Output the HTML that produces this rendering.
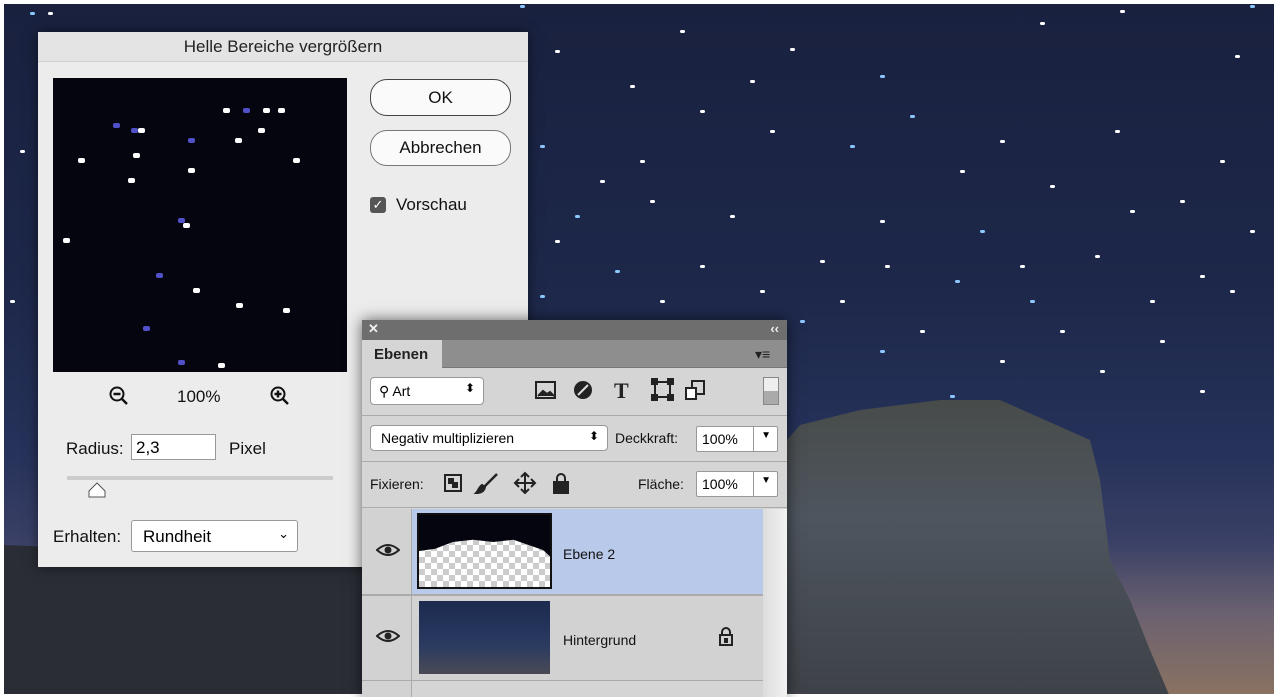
<!DOCTYPE html><html><head><style>
*{box-sizing:border-box;margin:0;padding:0}
body{width:1278px;height:697px;overflow:hidden;position:relative;font-family:"Liberation Sans",sans-serif;background:#fff}
.a{position:absolute}
.sky{left:4px;top:4px;width:1270px;height:690px;background:linear-gradient(180deg,#19213f 0%,#1d2749 40%,#26325a 65%,#3a4066 78%,#6a6070 88%,#8a7262 100%)}
.star{position:absolute;width:5px;height:3px;border-radius:2px;background:#fff}
.btn{position:absolute;border:1px solid #777;border-radius:17px;background:#fafafa;font-size:17px;text-align:center;color:#111}
.pt{font-size:14px;color:#111}
.field{background:#fff;border:1px solid #999;border-radius:3px}
</style></head><body>
<div class="a sky"></div>
<svg class="a" style="left:0;top:0" width="1278" height="697"><defs><linearGradient id="rg" x1="0" y1="0" x2="0" y2="1"><stop offset="0" stop-color="#474b4a"/><stop offset=".4" stop-color="#4e555e"/><stop offset="1" stop-color="#3e4248"/></linearGradient></defs>
<path d="M787 440L800 425L860 410L940 400L1000 400L1090 440L1100 480L1110 560L1130 600L1150 650L1170 697L787 697Z" fill="url(#rg)"/>
<path d="M4 545L380 560L380 697L4 697Z" fill="#2a2d36"/></svg>
<div id="stars"></div>
<div class="a" style="left:1274px;top:0;width:4px;height:697px;background:#fff"></div>
<div class="a" style="left:0;top:694px;width:1278px;height:3px;background:#fff"></div>
<div class="a" style="left:38px;top:32px;width:490px;height:535px;background:#ececec;box-shadow:0 0 12px rgba(0,0,0,.5)">
 <div class="a" style="left:0;top:0;width:490px;height:30px;background:#e4e4e4;border-bottom:1px solid #cfcfcf;text-align:center;font-size:17px;line-height:30px;color:#222">Helle Bereiche vergrößern</div>
 <div class="a" id="prev" style="left:15px;top:46px;width:294px;height:294px;background:#05050f;overflow:hidden"></div>
 <svg class="a" style="left:70px;top:353px" width="22" height="22"><circle cx="9" cy="9" r="6.5" fill="none" stroke="#111" stroke-width="2"/><path d="M5.5 9h7M14 14l5 5" stroke="#111" stroke-width="2.4"/></svg>
 <div class="a" style="left:139px;top:355px;font-size:17px;color:#111">100%</div>
 <svg class="a" style="left:231px;top:353px" width="22" height="22"><circle cx="9" cy="9" r="6.5" fill="none" stroke="#111" stroke-width="2"/><path d="M5.5 9h7M9 5.5v7M14 14l5 5" stroke="#111" stroke-width="2.4"/></svg>
 <div class="a" style="left:28px;top:407px;font-size:17px;color:#111">Radius:</div>
 <div class="a field" style="left:93px;top:402px;width:85px;height:26px;border-radius:0;font-size:17px;padding:3px 4px">2,3</div>
 <div class="a" style="left:191px;top:407px;font-size:17px;color:#111">Pixel</div>
 <div class="a" style="left:29px;top:444px;width:266px;height:4px;background:#ccc"></div>
 <svg class="a" style="left:49px;top:449px" width="20" height="18"><path d="M2 16V10L10 2L18 10V16Z" fill="#fff" stroke="#555"/></svg>
 <div class="a" style="left:15px;top:495px;font-size:17px;color:#111">Erhalten:</div>
 <div class="a field" style="left:93px;top:488px;width:167px;height:32px;font-size:17px;padding:6px 11px">Rundheit<span style="position:absolute;right:8px;top:5px;font-size:13px">&#8964;</span></div>
 <div class="btn" style="left:332px;top:47px;width:141px;height:37px;line-height:35px;border-width:1.5px;border-color:#444">OK</div>
 <div class="btn" style="left:332px;top:98px;width:141px;height:36px;line-height:34px">Abbrechen</div>
 <div class="a" style="left:332px;top:165px;width:16px;height:16px;background:#555;border-radius:3px;color:#fff;font-size:13px;text-align:center;line-height:16px">&#10003;</div>
 <div class="a" style="left:358px;top:163px;font-size:17px;color:#111">Vorschau</div>
</div>
<div class="a" style="left:362px;top:320px;width:425px;height:377px;background:#d5d5d5;box-shadow:0 0 14px rgba(0,0,0,.6)">
 <div class="a" style="left:0;top:0;width:425px;height:20px;background:#6e6e6e;color:#eee;font-size:13px;font-weight:bold;padding:1px 6px">✕<span style="position:absolute;right:8px">‹‹</span></div>
 <div class="a" style="left:0;top:20px;width:425px;height:28px;background:#8e8e8e;border-bottom:1px solid #777"></div>
 <div class="a" style="left:0;top:20px;width:80px;height:29px;background:#d5d5d5;font-size:15px;font-weight:bold;color:#222;padding:6px 12px">Ebenen</div>
 <div class="a" style="left:393px;top:26px;color:#222;font-size:14px">▾≡</div>
 <div class="a field" style="left:8px;top:57px;width:114px;height:28px;border-radius:4px;font-size:14px;padding:5px 8px">&#9906; Art<span style="position:absolute;right:8px;top:3px;font-size:12px">⬍</span></div>
 <svg class="a" style="left:172px;top:58px" width="180" height="26" fill="none" stroke="#222" stroke-width="2">
  <rect x="2" y="4" width="19" height="16"/><path d="M4 18l5-5 4 3 3-2 4 4" fill="#222"/>
  <circle cx="49" cy="12" r="8" fill="#222"/><path d="M44 17L54 7" stroke="#ddd"/>
  <text x="80" y="20" font-family="Liberation Serif" font-size="22" font-weight="bold" fill="#222" stroke="none">T</text>
  <rect x="121" y="4" width="15" height="15"/><rect x="118" y="1" width="5" height="5" fill="#222"/><rect x="134" y="1" width="5" height="5" fill="#222"/><rect x="118" y="17" width="5" height="5" fill="#222"/><rect x="134" y="17" width="5" height="5" fill="#222"/>
  <rect x="158" y="3" width="12" height="13"/><rect x="152" y="10" width="10" height="11" fill="#fff"/>
 </svg>
 <div class="a" style="left:401px;top:57px;width:16px;height:28px;border:1px solid #888;background:linear-gradient(#eee 50%,#aaa 50%)"></div>
 <div class="a" style="left:0;top:95px;width:425px;height:1px;background:#aaa"></div>
 <div class="a field" style="left:8px;top:105px;width:238px;height:26px;border-radius:4px;font-size:14px;padding:4px 10px">Negativ multiplizieren<span style="position:absolute;right:8px;top:3px;font-size:12px">⬍</span></div>
 <div class="a pt" style="left:253px;top:110px">Deckkraft:</div>
 <div class="a field" style="left:334px;top:106px;width:82px;height:26px;border-radius:2px;font-size:14px;padding:4px 5px">100%<span style="position:absolute;left:56px;top:0;width:1px;height:24px;background:#999"></span><span style="position:absolute;right:6px;top:3px;font-size:10px">▼</span></div>
 <div class="a" style="left:0;top:141px;width:425px;height:1px;background:#aaa"></div>
 <div class="a pt" style="left:8px;top:156px">Fixieren:</div>
 <svg class="a" style="left:80px;top:151px" width="130" height="26" stroke="#222" stroke-width="2" fill="none">
  <rect x="3" y="4" width="16" height="16"/><rect x="7" y="8" width="4" height="4" fill="#222"/><rect x="11" y="12" width="4" height="4" fill="#222"/>
  <path d="M55 3L42 16" stroke-width="2.5"/><path d="M34 22c4 0 8-1 9-6l-3-2c-3 2-4 6-6 8z" fill="#222"/>
  <path d="M83 2v20M73 12h20M79 6l4-4 4 4M79 18l4 4 4-4M77 8l-4 4 4 4M89 8l4 4-4 4"/>
  <rect x="112" y="11" width="14" height="11" fill="#222"/><path d="M115 11V7a4 4 0 0 1 8 0v4"/>
 </svg>
 <div class="a pt" style="left:276px;top:156px">Fläche:</div>
 <div class="a field" style="left:334px;top:151px;width:82px;height:26px;border-radius:2px;font-size:14px;padding:4px 5px">100%<span style="position:absolute;left:56px;top:0;width:1px;height:24px;background:#999"></span><span style="position:absolute;right:6px;top:3px;font-size:10px">▼</span></div>
 <div class="a" style="left:0;top:187px;width:425px;height:1px;background:#aaa"></div>
 <div class="a" style="left:50px;top:189px;width:351px;height:85px;background:#b9c9e9"></div>
 <div class="a" style="left:0;top:189px;width:50px;height:188px;background:#d2d2d2;border-right:1px solid #aaa"></div>
 <div class="a" style="left:0;top:274px;width:401px;height:2px;background:#aaa"></div>
 <div class="a" style="left:50px;top:276px;width:351px;height:84px;background:#d2d2d2"></div>
 <div class="a" style="left:0;top:360px;width:401px;height:1px;background:#aaa"></div>
 <div class="a" style="left:401px;top:189px;width:24px;height:188px;background:linear-gradient(90deg,#ddd,#f2f2f2)"></div>
 <svg class="a" style="left:14px;top:223px" width="24" height="14"><path d="M1 7Q12-3 23 7Q12 17 1 7Z" fill="none" stroke="#222" stroke-width="2"/><circle cx="12" cy="7" r="3.5" fill="#222"/></svg>
 <svg class="a" style="left:14px;top:309px" width="24" height="14"><path d="M1 7Q12-3 23 7Q12 17 1 7Z" fill="none" stroke="#222" stroke-width="2"/><circle cx="12" cy="7" r="3.5" fill="#222"/></svg>
 <div class="a" style="left:55px;top:193px;width:135px;height:76px;border:2px solid #111;background:repeating-conic-gradient(#ccc 0 25%,#fff 0 50%) 0 0/12px 12px;overflow:hidden">
  <div class="a" style="left:0;top:0;width:135px;height:45px;background:#050510;clip-path:polygon(0 0,100% 0,100% 100%,92% 78%,70% 55%,55% 60%,40% 55%,25% 60%,12% 75%,0 80%)"></div>
 </div>
 <div class="a pt" style="left:201px;top:226px">Ebene 2</div>
 <div class="a" style="left:57px;top:281px;width:131px;height:73px;background:linear-gradient(180deg,#1c2a50,#2a3a60 60%,#4a4a55)"></div>
 <div class="a pt" style="left:201px;top:312px">Hintergrund</div>
 <svg class="a" style="left:356px;top:307px" width="16" height="20" fill="none" stroke="#222" stroke-width="2"><rect x="2" y="8" width="12" height="10"/><path d="M4 8V5a4 4 0 0 1 8 0v3"/><rect x="7" y="12" width="2" height="3" fill="#222"/></svg>
</div>
<script>
var s=[[520,5],[555,50],[680,30],[790,48],[880,75],[1040,22],[1120,10],[1235,55],[1250,5],[630,85],[700,110],[750,80],[910,115],[1000,140],[1115,130],[1220,160],[540,145],[600,180],[640,160],[770,130],[850,145],[960,170],[1050,185],[1180,200],[575,215],[650,200],[730,215],[880,220],[980,230],[1130,210],[1250,230],[555,240],[615,270],[700,265],[820,260],[885,265],[955,280],[1020,265],[1095,255],[1200,275],[540,295],[660,300],[760,290],[840,300],[1030,300],[1150,300],[1230,290],[560,320],[800,320],[920,330],[1060,330],[1160,340],[880,350],[1000,360],[1100,370],[760,360],[950,395],[1200,390],[20,150],[10,300],[30,12],[48,12]];
var h='';s.forEach(function(p,i){h+='<div class="star" style="left:'+p[0]+'px;top:'+p[1]+'px;'+(i%4==0?'background:#8cc8ff':'')+'"></div>'});
document.getElementById('stars').innerHTML=h;
var q=[[25,80],[80,75],[135,60],[210,30],[225,30],[78,50],[85,50],[170,30],[190,30],[182,60],[135,90],[125,140],[130,145],[10,160],[103,195],[140,210],[183,225],[90,248],[240,80],[75,100],[60,45],[230,230],[165,285],[125,282],[205,50]];
var g='';q.forEach(function(p,i){g+='<div class="star" style="left:'+p[0]+'px;top:'+p[1]+'px;width:7px;height:5px;'+(i%3==2?'background:#5050c8':'')+'"></div>'});
document.getElementById('prev').innerHTML=g;
</script>
</body></html>
